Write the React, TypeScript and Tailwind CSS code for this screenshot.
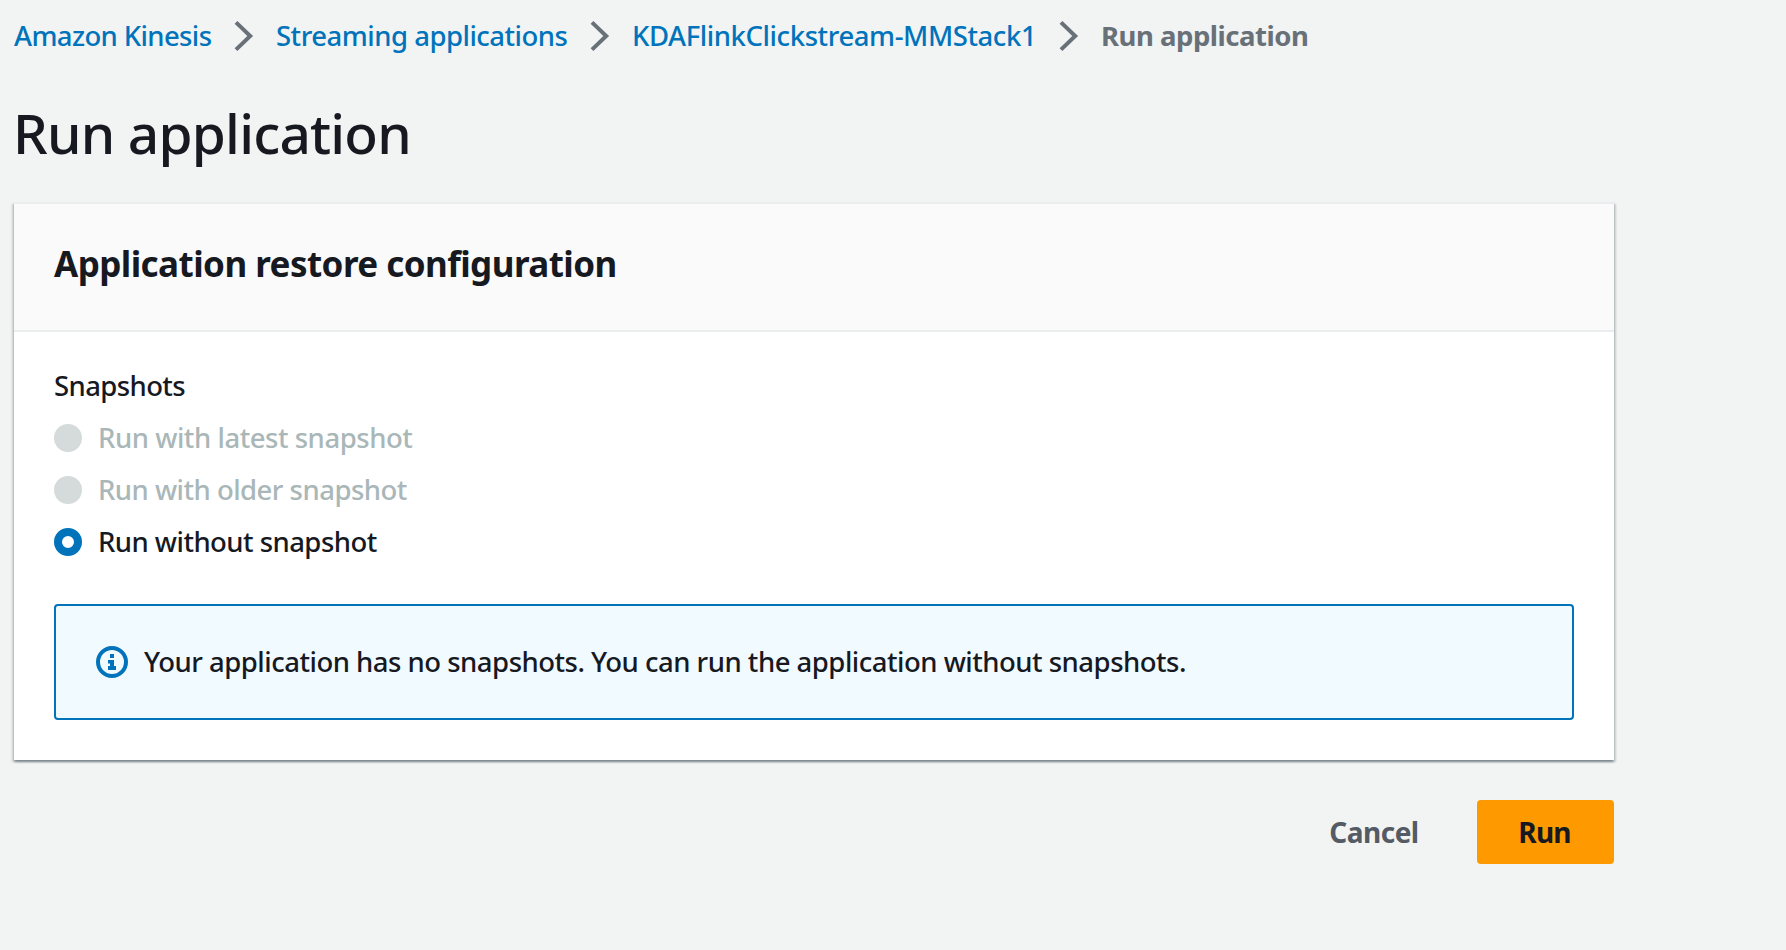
const crumbs = [
  { label: 'Amazon Kinesis', style: 'w-[220px] tracking-[-0.62px]' },
  { label: 'Streaming applications', style: 'w-[314px] tracking-[-0.5px]' },
  { label: 'KDAFlinkClickstream-MMStack1', style: 'w-[427px] tracking-[-0.42px]' },
];

const options = [
  { label: 'Run with latest snapshot', enabled: false, tracking: 'tracking-[-0.46px]' },
  { label: 'Run with older snapshot', enabled: false, tracking: 'tracking-[-0.52px]' },
  { label: 'Run without snapshot', enabled: true, tracking: 'tracking-[-0.54px]' },
];

function Chevron() {
  return (
    <svg className="mr-[22px] h-8 w-5 shrink-0" viewBox="0 0 20 32" fill="none" stroke="#687078" strokeWidth="4">
      <path d="M2 2.4 L16.2 16 L2 29.6" />
    </svg>
  );
}

function InfoIcon() {
  return (
    <svg className="h-8 w-8 shrink-0" viewBox="0 0 32 32" fill="none">
      <circle cx="16" cy="16" r="14" stroke="#0073bb" strokeWidth="4" />
      <path d="M14 8h4v4h-4zM12 14h6v6h2v4h-8v-4h2v-2.5h-2z" fill="#0073bb" />
    </svg>
  );
}

function Radio({ enabled }: { enabled: boolean }) {
  return enabled ? (
    <span className="h-7 w-7 shrink-0 rounded-full border-8 border-[#0073bb] bg-white" />
  ) : (
    <span className="h-7 w-7 shrink-0 rounded-full bg-[#d5dbdb]" />
  );
}

export default function App() {
  return (
    <div className="h-[950px] w-full overflow-hidden bg-[#f2f3f3] pl-3.5 pt-3.5 font-['Noto_Sans',sans-serif] text-[27.5px] leading-[44px] font-medium text-[#16191f]">
      <nav className="flex h-11 items-center whitespace-nowrap">
        {crumbs.map((c) => (
          <div key={c.label} className="flex items-center">
            <a className={`text-[#0073bb] ${c.style}`}>{c.label}</a>
            <Chevron />
          </div>
        ))}
        <span className="font-bold tracking-[-0.48px] text-[#687078]">Run application</span>
      </nav>

      <h1 className="mt-[39px] -ml-px text-[55px] leading-[72px] tracking-[-0.8px]">Run application</h1>

      <main className="w-[1600px]">
        <section className="mt-[33px] border-t-2 border-[#eaeded] bg-white shadow-[0_2px_2px_0_rgba(0,28,36,0.3),2px_2px_2px_0_rgba(0,28,36,0.15),-2px_2px_2px_0_rgba(0,28,36,0.15)]">
          <header className="h-32 border-b-2 border-[#eaeded] bg-[#fafafa] px-10 pt-[38px]">
            <h2 className="text-[35px] leading-[44px] font-bold tracking-[-0.55px]">Application restore configuration</h2>
          </header>
          <div className="px-10 pt-8 pb-10">
            <div className="tracking-[-0.6px]">Snapshots</div>
            <div className="mt-1 flex flex-col">
              {options.map((o) => (
                <label key={o.label} className="flex h-[52px] items-center gap-4">
                  <Radio enabled={o.enabled} />
                  <span className={`${o.tracking} ${o.enabled ? 'text-[#16191f]' : 'text-[#aab7b8]'}`}>{o.label}</span>
                </label>
              ))}
            </div>
            <div className="mt-9 flex h-[116px] items-center gap-4 rounded-[4px] border-2 border-[#0073bb] bg-[#f1faff] px-10">
              <InfoIcon />
              <p className="whitespace-nowrap tracking-[-0.5px]">
                Your application has no snapshots. You can run the application without snapshots.
              </p>
            </div>
          </div>
        </section>

        <div className="mt-10 flex h-16 justify-end text-[28px]">
          <button className="mr-[18px] flex w-[170px] items-center justify-center font-bold tracking-[-0.52px] text-[#545b64]">
            Cancel
          </button>
          <button className="flex w-[137px] items-center justify-center rounded-[4px] bg-[#ff9900] pr-0.5 font-bold tracking-[-0.8px]">
            Run
          </button>
        </div>
      </main>
    </div>
  );
}
